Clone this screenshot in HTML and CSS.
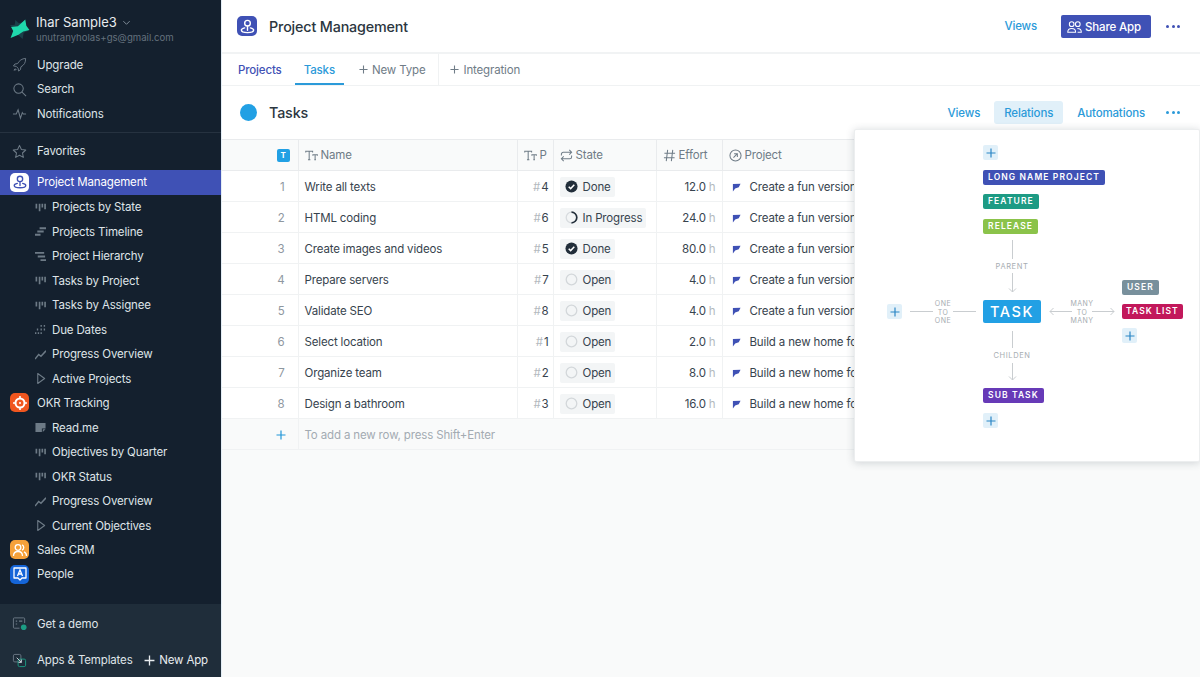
FILE: index.html
```html
<!DOCTYPE html>
<html lang="en">
<head>
    <meta charset="UTF-8">
    <title>Project Management - Tasks</title>
    <link rel="stylesheet" href="styles.css">
</head>
<body>
    <svg class="sprite" xmlns="http://www.w3.org/2000/svg">
        <symbol id="i-board" viewBox="0 0 12 12"><path d="M1.500 2v5M5 2v8M8 2v4M11 2v6" fill="none" stroke="currentColor" stroke-width="1.800"/></symbol>
        <symbol id="i-timeline" viewBox="0 0 12 12"><path d="M5 2.500h7M2.500 6h7M0 9.500h6" fill="none" stroke="currentColor" stroke-width="2.200"/></symbol>
        <symbol id="i-tree" viewBox="0 0 12 12"><path d="M0 2h10M3 6h8M6 10h6" fill="none" stroke="currentColor" stroke-width="2"/></symbol>
        <symbol id="i-dates" viewBox="0 0 12 12"><path d="M6 2h1.500M9.500 2H11M2 6h1.500M6 6h1.500M9.500 6H11M0 10h1.500M3 10h1.500M6 10h1.500" fill="none" stroke="currentColor" stroke-width="2"/></symbol>
        <symbol id="i-chart" viewBox="0 0 12 12"><path d="M0 11l4-5 2.500 2L12 2" fill="none" stroke="currentColor" stroke-width="1.600"/></symbol>
        <symbol id="i-play" viewBox="0 0 12 12"><path d="M3 .5L10.500 6 3 11.500z" fill="none" stroke="currentColor" stroke-width="1.200" stroke-linejoin="round"/></symbol>
        <symbol id="i-doc" viewBox="0 0 12 12"><path d="M.5 1h11v6H7.500v4h-7zM8.500 11l3-3h-3z" fill="currentColor"/></symbol>
        <symbol id="i-pin" viewBox="0 0 18 18"><circle cx="9" cy="5.500" r="3" fill="none" stroke="currentColor" stroke-width="1.500"/><path d="M9 8.500v4.500M6 10.500c-2.200.5-3.500 1.200-3.500 2.300C2.500 14.400 5.400 15.500 9 15.500s6.500-1.100 6.500-2.700c0-1.100-1.300-1.800-3.500-2.300" fill="none" stroke="currentColor" stroke-width="1.500" stroke-linecap="round"/></symbol>
        <symbol id="i-text" viewBox="0 0 14 14"><path d="M.8 3.800V2.300h7.400v1.500M4.500 2.300v9.200M3.200 11.500h2.600M8.500 7.200V6.200h4.800v1M10.900 6.200v5.300M10 11.500h1.800" fill="none" stroke="currentColor" stroke-width="1.100"/></symbol>
        <symbol id="i-done" viewBox="0 0 14 14"><circle cx="7" cy="7" r="6.500" fill="#222e3a"/><path d="M4 7.200l2.100 2.100L10 5.200" fill="none" stroke="#fff" stroke-width="1.600"/></symbol>
        <symbol id="i-progress" viewBox="0 0 14 14"><circle cx="7" cy="7" r="5.700" fill="none" stroke="#d8dcdf" stroke-width="1.400"/><path d="M7 1.300a5.700 5.700 0 0 1 0 11.400" fill="none" stroke="#222e3a" stroke-width="1.800"/></symbol>
        <symbol id="i-open" viewBox="0 0 14 14"><circle cx="7" cy="7" r="5.700" fill="none" stroke="#d3d7da" stroke-width="1.400"/></symbol>
        <symbol id="i-flag" viewBox="0 0 10 10"><path d="M1 1.200L9.500.8 7.500 4.600 3.500 6 1 9.500z" fill="#3f51b5"/></symbol>
        <symbol id="i-plus" viewBox="0 0 10 10"><path d="M5 .5v9M.5 5h9" fill="none" stroke="currentColor" stroke-width="1.200"/></symbol>
    </svg>

    <div class="app">
        <aside class="sidebar">
            <div class="account">
                <svg class="logo" width="21" height="21" viewBox="0 0 20 20"><path d="M6 1l3.500 3L13 3l1 5 5 3-5 2-1 6-4.500-4-6 1 2.500-5L1 6l4.500-.5z" fill="#1b4049"/><path d="M15.500 .5l1 6 3 4-6 1.500-4.500 3L1.500 18l2.500-6.500L2 7.500l6.500-.5z" fill="#1fd8ac"/></svg>
                <div class="account-text">
                    <div class="account-name">Ihar Sample3
                        <svg width="9" height="9" viewBox="0 0 10 10"><path d="M1.500 3.500L5 7l3.500-3.500" fill="none" stroke="#7f8c98" stroke-width="1.100"/></svg>
                    </div>
                    <div class="account-mail">unutranyholas+gs@gmail.com</div>
                </div>
            </div>

            <nav class="nav">
                <a class="nav-item">
                    <svg class="nav-icon" viewBox="0 0 16 16"><path d="M14.500 1.500c-4 .3-6.500 2-8.500 5.500L3 7.500 1.500 9.500l3 .5 2 2 .5 3 2-1.500.5-3c3.500-2 5.200-4.500 5-9zM2 14l2.500-.5-1-1z" fill="none" stroke="currentColor" stroke-width="1"/></svg>
                    Upgrade
                </a>
                <a class="nav-item">
                    <svg class="nav-icon" viewBox="0 0 16 16"><circle cx="7" cy="7" r="5" fill="none" stroke="currentColor" stroke-width="1.100"/><path d="M10.700 10.700L15 15" stroke="currentColor" stroke-width="1.100"/></svg>
                    Search
                </a>
                <a class="nav-item">
                    <svg class="nav-icon" viewBox="0 0 16 16"><path d="M1 8.500h3.500L6.500 4l2.500 9 2-6 1 1.500h3" fill="none" stroke="currentColor" stroke-width="1.100"/></svg>
                    Notifications
                </a>
            </nav>

            <div class="nav nav-divided">
                <a class="nav-item">
                    <svg class="nav-icon" viewBox="0 0 16 16"><path d="M8 1.500l2 4.300 4.700.6-3.500 3.200.9 4.700L8 12l-4.100 2.300.9-4.700L1.300 6.400 6 5.800z" fill="none" stroke="currentColor" stroke-width="1.100" stroke-linejoin="round"/></svg>
                    Favorites
                </a>
            </div>

            <div class="nav nav-apps">
                <a class="nav-app is-active">
                    <span class="app-icon app-icon-white"><svg width="16" height="16"><use href="#i-pin"/></svg></span>
                    Project Management
                </a>
                <a class="nav-sub"><svg><use href="#i-board"/></svg>Projects by State</a>
                <a class="nav-sub"><svg><use href="#i-timeline"/></svg>Projects Timeline</a>
                <a class="nav-sub"><svg><use href="#i-tree"/></svg>Project Hierarchy</a>
                <a class="nav-sub"><svg><use href="#i-board"/></svg>Tasks by Project</a>
                <a class="nav-sub"><svg><use href="#i-board"/></svg>Tasks by Assignee</a>
                <a class="nav-sub"><svg><use href="#i-dates"/></svg>Due Dates</a>
                <a class="nav-sub"><svg><use href="#i-chart"/></svg>Progress Overview</a>
                <a class="nav-sub"><svg><use href="#i-play"/></svg>Active Projects</a>

                <a class="nav-app">
                    <span class="app-icon app-icon-orange">
                        <svg width="16" height="16" viewBox="0 0 16 16"><circle cx="8" cy="8" r="4.500" fill="none" stroke="#fff" stroke-width="2"/><path d="M8 1v3M8 12v3M1 8h3M12 8h3" stroke="#fff" stroke-width="1.600"/><circle cx="8" cy="8" r="1" fill="#fff"/></svg>
                    </span>
                    OKR Tracking
                </a>
                <a class="nav-sub"><svg><use href="#i-doc"/></svg>Read.me</a>
                <a class="nav-sub"><svg><use href="#i-board"/></svg>Objectives by Quarter</a>
                <a class="nav-sub"><svg><use href="#i-board"/></svg>OKR Status</a>
                <a class="nav-sub"><svg><use href="#i-chart"/></svg>Progress Overview</a>
                <a class="nav-sub"><svg><use href="#i-play"/></svg>Current Objectives</a>

                <a class="nav-app">
                    <span class="app-icon app-icon-amber">
                        <svg width="16" height="16" viewBox="0 0 16 16"><circle cx="6" cy="5.500" r="2.800" fill="none" stroke="#fff" stroke-width="1.300"/><path d="M1.500 14c0-3 1.800-4.500 4.500-4.500s4.500 1.500 4.500 4.500M10 2.900a2.800 2.800 0 0 1 0 5.200M12 9.800c1.600.6 2.500 2 2.500 4.200" fill="none" stroke="#fff" stroke-width="1.300"/></svg>
                    </span>
                    Sales CRM
                </a>
                <a class="nav-app">
                    <span class="app-icon app-icon-blue">
                        <svg width="16" height="16" viewBox="0 0 16 16"><path d="M2 2h12v10H10l-2 2-2-2H2z" fill="none" stroke="#fff" stroke-width="1.300" stroke-linejoin="round"/><path d="M5.500 10L8 4l2.500 6M6.500 8h3" fill="none" stroke="#fff" stroke-width="1.300"/></svg>
                    </span>
                    People
                </a>
            </div>

            <div class="sidebar-footer">
                <a class="nav-item">
                    <svg class="nav-icon" viewBox="0 0 16 16"><path d="M8 13H2.500A1 1 0 0 1 1.500 12V3a1 1 0 0 1 1-1h10a1 1 0 0 1 1 1v4.500" fill="none" stroke="currentColor" stroke-width="1"/><path d="M4 5.500h1.500M7.500 5.500H11M4 8.500h1.500" stroke="currentColor" stroke-width="1.200"/><circle cx="12.500" cy="12" r="3" fill="#1c9c84"/></svg>
                    Get a demo
                </a>
                <div class="footer-row">
                    <a class="nav-item">
                        <svg class="nav-icon" viewBox="0 0 16 16"><rect x="1.500" y="1.500" width="8" height="8" rx="1.500" fill="none" stroke="currentColor" stroke-width="1"/><rect x="6.500" y="6.500" width="8" height="8" rx="1.500" fill="none" stroke="#1c9c84" stroke-width="1"/><path d="M5 5l5 5M10 7v3H7" fill="none" stroke="#cfd6dc" stroke-width="1"/></svg>
                        Apps &amp; Templates
                    </a>
                    <a class="new-app"><svg width="11" height="11"><use href="#i-plus"/></svg>New App</a>
                </div>
            </div>
        </aside>

        <main class="main">
            <header class="topbar">
                <span class="app-icon app-icon-indigo"><svg width="17" height="17"><use href="#i-pin"/></svg></span>
                <h1>Project Management</h1>
                <a class="link topbar-views">Views</a>
                <a class="share-btn">
                    <svg width="15" height="14" viewBox="0 0 16 14"><circle cx="5" cy="4" r="2.500" fill="none" stroke="#fff" stroke-width="1.100"/><circle cx="11.500" cy="4" r="2.500" fill="none" stroke="#fff" stroke-width="1.100"/><path d="M.8 12.500c0-2.500 1.500-4 4.200-4s4.200 1.500 4.200 4zM11 8.500c2.700 0 4.300 1.500 4.300 4h-4" fill="none" stroke="#fff" stroke-width="1.100"/></svg>
                    Share App
                </a>
                <span class="dots"><i></i><i></i><i></i></span>
            </header>

            <div class="tabs">
                <a class="tab tab-projects">Projects</a>
                <a class="tab is-active">Tasks</a>
                <a class="tab tab-add"><svg width="9" height="9"><use href="#i-plus"/></svg>New Type</a>
                <a class="tab tab-add tab-integration"><svg width="9" height="9"><use href="#i-plus"/></svg>Integration</a>
            </div>

            <div class="type-header">
                <span class="type-dot"></span>
                <h2>Tasks</h2>
                <a class="link">Views</a>
                <a class="link link-active">Relations</a>
                <a class="link">Automations</a>
                <span class="dots dots-blue"><i></i><i></i><i></i></span>
            </div>

            <div class="table-area">
                <table class="grid">
                    <colgroup>
                        <col class="col-index"><col class="col-name"><col class="col-p"><col class="col-state"><col class="col-effort"><col>
                    </colgroup>
                    <thead>
                        <tr>
                            <th class="cell-index"><span class="t-badge">T</span></th>
                            <th><svg class="th-icon"><use href="#i-text"/></svg>Name</th>
                            <th><svg class="th-icon"><use href="#i-text"/></svg>P</th>
                            <th>
                                <svg class="th-icon" viewBox="0 0 14 14"><path d="M1.500 7V5.500a2 2 0 0 1 2-2h9M10 1l2.500 2.500L10 6M12.500 7v1.500a2 2 0 0 1-2 2h-9M4 8l-2.500 2.500L4 13" fill="none" stroke="currentColor" stroke-width="1.100"/></svg>State
                            </th>
                            <th>
                                <svg class="th-icon" viewBox="0 0 14 14"><path d="M5 1L3.500 13M10.500 1L9 13M1.500 4.500h11.500M1 9.500h11.500" fill="none" stroke="currentColor" stroke-width="1.100"/></svg>Effort
                            </th>
                            <th>
                                <svg class="th-icon" viewBox="0 0 14 14"><circle cx="7" cy="7" r="6" fill="none" stroke="currentColor" stroke-width="1.100"/><path d="M4.800 9.200L9 5M5.500 5H9v3.500" fill="none" stroke="currentColor" stroke-width="1.100"/></svg>Project
                            </th>
                        </tr>
                    </thead>
                    <tbody>
                        <tr>
                            <td class="cell-index">1</td><td>Write all texts</td><td class="cell-id"><span>#</span>4</td>
                            <td><span class="state"><svg><use href="#i-done"/></svg>Done</span></td>
                            <td class="cell-num">12.0 <span>h</span></td>
                            <td class="cell-project"><svg><use href="#i-flag"/></svg>Create a fun version of the product</td>
                        </tr>
                        <tr>
                            <td class="cell-index">2</td><td>HTML coding</td><td class="cell-id"><span>#</span>6</td>
                            <td><span class="state"><svg><use href="#i-progress"/></svg>In Progress</span></td>
                            <td class="cell-num">24.0 <span>h</span></td>
                            <td class="cell-project"><svg><use href="#i-flag"/></svg>Create a fun version of the product</td>
                        </tr>
                        <tr>
                            <td class="cell-index">3</td><td>Create images and videos</td><td class="cell-id"><span>#</span>5</td>
                            <td><span class="state"><svg><use href="#i-done"/></svg>Done</span></td>
                            <td class="cell-num">80.0 <span>h</span></td>
                            <td class="cell-project"><svg><use href="#i-flag"/></svg>Create a fun version of the product</td>
                        </tr>
                        <tr>
                            <td class="cell-index">4</td><td>Prepare servers</td><td class="cell-id"><span>#</span>7</td>
                            <td><span class="state"><svg><use href="#i-open"/></svg>Open</span></td>
                            <td class="cell-num">4.0 <span>h</span></td>
                            <td class="cell-project"><svg><use href="#i-flag"/></svg>Create a fun version of the product</td>
                        </tr>
                        <tr>
                            <td class="cell-index">5</td><td>Validate SEO</td><td class="cell-id"><span>#</span>8</td>
                            <td><span class="state"><svg><use href="#i-open"/></svg>Open</span></td>
                            <td class="cell-num">4.0 <span>h</span></td>
                            <td class="cell-project"><svg><use href="#i-flag"/></svg>Create a fun version of the product</td>
                        </tr>
                        <tr>
                            <td class="cell-index">6</td><td>Select location</td><td class="cell-id"><span>#</span>1</td>
                            <td><span class="state"><svg><use href="#i-open"/></svg>Open</span></td>
                            <td class="cell-num">2.0 <span>h</span></td>
                            <td class="cell-project"><svg><use href="#i-flag"/></svg>Build a new home for the team</td>
                        </tr>
                        <tr>
                            <td class="cell-index">7</td><td>Organize team</td><td class="cell-id"><span>#</span>2</td>
                            <td><span class="state"><svg><use href="#i-open"/></svg>Open</span></td>
                            <td class="cell-num">8.0 <span>h</span></td>
                            <td class="cell-project"><svg><use href="#i-flag"/></svg>Build a new home for the team</td>
                        </tr>
                        <tr>
                            <td class="cell-index">8</td><td>Design a bathroom</td><td class="cell-id"><span>#</span>3</td>
                            <td><span class="state"><svg><use href="#i-open"/></svg>Open</span></td>
                            <td class="cell-num">16.0 <span>h</span></td>
                            <td class="cell-project"><svg><use href="#i-flag"/></svg>Build a new home for the team</td>
                        </tr>
                        <tr class="row-add">
                            <td class="cell-index"><svg><use href="#i-plus"/></svg></td>
                            <td colspan="5">To add a new row, press Shift+Enter</td>
                        </tr>
                    </tbody>
                </table>
            </div>

            <!-- relations diagram, places are in styles.css -->
            <div class="relations">
                <span class="rel-add add-top"><svg width="10" height="10"><use href="#i-plus"/></svg></span>
                <span class="rel-tag tag-indigo">LONG NAME PROJECT</span>
                <span class="rel-tag tag-green">FEATURE</span>
                <span class="rel-tag tag-lime">RELEASE</span>

                <span class="rel-line line-parent"></span>
                <span class="rel-label label-parent">PARENT</span>
                <svg class="rel-arrow arrow-parent" width="11" height="20" viewBox="0 0 11 20"><path d="M5.500 0v19M2 15.500l3.500 3.500L9 15.500" fill="none" stroke="#c9cdd0"/></svg>

                <span class="rel-add add-left"><svg width="10" height="10"><use href="#i-plus"/></svg></span>
                <span class="rel-line line-one-a"></span>
                <span class="rel-label rel-stack label-one">ONE<br>TO<br>ONE</span>
                <span class="rel-line line-one-b"></span>

                <span class="rel-task">TASK</span>

                <svg class="rel-arrow arrow-many-a" width="23" height="11" viewBox="0 0 23 11"><path d="M23 5.500H1M4.500 2L1 5.500 4.500 9" fill="none" stroke="#c9cdd0"/></svg>
                <span class="rel-label rel-stack label-many">MANY<br>TO<br>MANY</span>
                <svg class="rel-arrow arrow-many-b" width="23" height="11" viewBox="0 0 23 11"><path d="M0 5.500h22M18.500 2L22 5.500 18.500 9" fill="none" stroke="#c9cdd0"/></svg>

                <span class="rel-tag tag-grey">USER</span>
                <span class="rel-tag tag-pink">TASK LIST</span>
                <span class="rel-add add-right"><svg width="10" height="10"><use href="#i-plus"/></svg></span>

                <span class="rel-line line-child"></span>
                <span class="rel-label label-child">CHILDEN</span>
                <svg class="rel-arrow arrow-child" width="11" height="18" viewBox="0 0 11 18"><path d="M5.500 0v17M2 13.500l3.500 3.500L9 13.500" fill="none" stroke="#c9cdd0"/></svg>

                <span class="rel-tag tag-purple">SUB TASK</span>
                <span class="rel-add add-bottom"><svg width="10" height="10"><use href="#i-plus"/></svg></span>
            </div>
        </main>
    </div>
</body>
</html>
```

FILE: styles.css
```css
* {
    box-sizing: border-box;
}

html, body {
    margin: 0;
    padding: 0;
    height: 100%;
    overflow: hidden;
    font-family: Inter, "Liberation Sans", sans-serif;
    font-size: 11.5px;
    letter-spacing: -0.15px;
    color: #37434e;
    background-color: #fff;
}

.sprite {
    display: none;
}

.app {
    display: flex;
    height: 677px;
}

/* sidebar */
.sidebar {
    width: 221px;
    flex-shrink: 0;
    display: flex;
    flex-direction: column;
    background-color: #14202e;
    color: #dfe4e8;
}

.account {
    display: flex;
    gap: 6px;
    height: 52px;
    padding: 14px 0 0 9px;
}

.logo {
    margin-top: 5px;
    flex-shrink: 0;
}

.account-name {
    font-size: 13px;
    letter-spacing: 0;
    line-height: 16px;
    color: #e8ecef;
}

.account-name svg {
    margin-left: 2px;
}

.account-mail {
    font-size: 9.6px;
    letter-spacing: 0;
    line-height: 15px;
    color: #64717d;
}

.nav-item {
    display: flex;
    align-items: center;
    gap: 10px;
    height: 24.5px;
    padding: 1px 0 0 12px;
    color: #dfe4e8;
    white-space: nowrap;
}

.nav-icon {
    width: 15px;
    height: 15px;
    flex-shrink: 0;
    color: #6d7a86;
}

.nav-divided {
    margin-top: 6px;
    padding: 6px 0;
    border-top: 1px solid #263240;
}

.nav-apps {
    flex: 1;
    margin-top: 1px;
}

.nav-app {
    display: flex;
    align-items: center;
    gap: 8px;
    height: 24.5px;
    padding: 0 0 0 10px;
    white-space: nowrap;
}

.nav-app.is-active {
    background-color: #3f51b5;
    color: #fff;
}

.app-icon {
    width: 19px;
    height: 19px;
    border-radius: 5px;
    display: inline-flex;
    align-items: center;
    justify-content: center;
    flex-shrink: 0;
}

.app-icon-white {
    background-color: #fff;
    color: #3f51b5;
}

.app-icon-orange {
    background-color: #f0561f;
}

.app-icon-amber {
    background-color: #f5a13a;
}

.app-icon-blue {
    background-color: #1565d8;
}

.app-icon-indigo {
    width: 20px;
    height: 20px;
    background-color: #3f51b5;
    color: #fff;
}

.nav-sub {
    display: flex;
    align-items: center;
    gap: 6px;
    height: 24.5px;
    padding: 1px 0 0 35px;
    white-space: nowrap;
}

.nav-sub svg {
    width: 11px;
    height: 11px;
    flex-shrink: 0;
    color: #6d7a86;
}

.sidebar-footer {
    height: 73px;
    padding-top: 7px;
    background-color: #1f2d3a;
}

.footer-row {
    display: flex;
    justify-content: space-between;
    margin-top: 12px;
    padding-right: 13px;
}

.new-app {
    display: flex;
    align-items: center;
    gap: 4px;
    padding-top: 1px;
    color: #e8ecef;
}

/* main area */
.main {
    flex: 1;
    min-width: 0;
    position: relative;
    display: flex;
    flex-direction: column;
    border-left: 1px solid #e3edf5;
}

.topbar {
    display: flex;
    align-items: center;
    height: 54px;
    padding: 0 20px 0 15px;
    border-bottom: 2px solid #f1f3f4;
}

.topbar h1 {
    flex: 1;
    margin: 0 0 0 12px;
    font-size: 14.3px;
    font-weight: 500;
    color: #2b3640;
}

.link {
    display: flex;
    align-items: center;
    height: 23px;
    color: #2b9ad9;
    font-weight: 500;
    padding: 0 10px;
    border-radius: 3px;
}

.topbar-views {
    margin-right: 14px;
}

.link-active {
    background-color: #e1f0f9;
}

.share-btn {
    display: flex;
    align-items: center;
    gap: 3px;
    height: 23px;
    padding: 1px 10px 0 6px;
    border-radius: 2px;
    background-color: #3f51b5;
    color: #fff;
    font-weight: 500;
}

.dots {
    display: flex;
    gap: 2.5px;
    margin-left: 15px;
    color: #3f51b5;
}

.dots i {
    width: 3px;
    height: 3px;
    border-radius: 50%;
    background-color: currentColor;
}

.dots-blue {
    color: #2b9ad9;
    margin-left: 7px;
}

.tabs {
    display: flex;
    height: 32px;
    padding-left: 7px;
    border-bottom: 1px solid #f0f2f3;
}

.tab {
    display: flex;
    align-items: center;
    gap: 4px;
    padding: 0 9px;
    font-weight: 500;
    color: #6f7c87;
}

.tab-projects {
    color: #3f51b5;
    margin-right: 4px;
}

.tab.is-active {
    color: #2b9ad9;
    border-bottom: 2px solid #2b9ad9;
    padding-top: 2px;
}

.tab-add {
    margin-left: 6px;
    font-weight: 400;
}

.tab-integration {
    margin-left: 4px;
    padding-left: 11px;
    border-left: 1px solid #f0f2f3;
}

.type-header {
    display: flex;
    align-items: center;
    gap: 4px;
    height: 53px;
    padding: 0 20px 0 18px;
}

.type-dot {
    width: 17px;
    height: 17px;
    border-radius: 50%;
    background-color: #22a0e4;
}

.type-header h2 {
    flex: 1;
    margin: 0 0 0 8px;
    font-size: 14.3px;
    font-weight: 500;
    color: #2b3640;
}

/* table */
.table-area {
    flex: 1;
    background-color: #f9fafa;
}

.grid {
    width: 100%;
    table-layout: fixed;
    border-collapse: collapse;
    background-color: #fff;
}

.col-index {
    width: 76px;
}

.col-name {
    width: 219px;
}

.col-p {
    width: 36px;
}

.col-state {
    width: 103px;
}

.col-effort {
    width: 66px;
}

.grid th, .grid td {
    height: 31px;
    padding: 0 6px;
    border: 1px solid #f0f2f3;
    white-space: nowrap;
    overflow: hidden;
    text-align: left;
    color: #37434e;
    font-weight: 400;
}

.grid td {
    padding-top: 1px;
}

.grid th {
    background-color: #f9fafa;
    color: #6f7c87;
    border-color: #e9ebed;
}

.grid th:first-child, .grid td:first-child {
    border-left: none;
}

.grid th:last-child, .grid td:last-child {
    border-right: none;
}

.th-icon {
    width: 13px;
    height: 13px;
    margin-right: 3px;
    vertical-align: -3px;
    color: #6f7c87;
}

.grid .cell-index {
    text-align: right;
    padding-right: 13px;
    color: #8e979f;
}

.t-badge {
    display: inline-block;
    width: 13px;
    height: 13px;
    border-radius: 2px;
    background-color: #22a0e4;
    color: #fff;
    font-size: 8px;
    font-weight: 700;
    line-height: 13px;
    text-align: center;
    vertical-align: middle;
    margin-right: -5px;
}

.grid .cell-id {
    text-align: right;
    padding-right: 4px;
}

.grid .cell-num {
    text-align: right;
}

.cell-id span {
    margin-right: 1px;
    color: #b3b9be;
}

.cell-num span {
    color: #b3b9be;
}

.state {
    display: inline-flex;
    align-items: center;
    gap: 5px;
    height: 20px;
    padding: 0 4px 0 5px;
    border-radius: 2px;
    background-color: #f3f5f6;
}

.state svg {
    width: 13px;
    height: 13px;
}

.grid .cell-project {
    padding-left: 9px;
}

.cell-project svg {
    width: 9px;
    height: 9px;
    margin-right: 9px;
    vertical-align: -1px;
}

.row-add td {
    background-color: #f9fafa;
    color: #a3abb2;
    border-right: none;
}

.grid .row-add .cell-index {
    border-right: 1px solid #f0f2f3;
}

.row-add .cell-index svg {
    width: 10px;
    height: 10px;
    margin-right: -1px;
    vertical-align: -1px;
    color: #2196d8;
}

/* relations popover, a free canvas for the diagram */
.relations {
    position: absolute;
    top: 129px;
    right: 0;
    width: 346px;
    height: 333px;
    background-color: #fff;
    border: 1px solid #eceeef;
    border-radius: 2px;
    box-shadow: 0 1px 8px rgba(40, 55, 70, 0.2);
}

.rel-add, .rel-tag, .rel-task, .rel-label, .rel-line, .rel-arrow {
    position: absolute;
}

.rel-add {
    display: flex;
    align-items: center;
    justify-content: center;
    width: 15px;
    height: 15px;
    border-radius: 2px;
    background-color: #e1f0f9;
    color: #2b86c5;
}

.add-top {
    left: 128px;
    top: 15px;
}

.add-left {
    left: 32px;
    top: 174px;
}

.add-right {
    left: 267px;
    top: 198px;
}

.add-bottom {
    left: 128px;
    top: 283px;
}

.rel-tag {
    height: 15px;
    padding: 0 5px;
    border-radius: 2px;
    color: #fff;
    font-size: 8.5px;
    font-weight: 600;
    letter-spacing: 1.1px;
    line-height: 15px;
    white-space: nowrap;
}

.tag-indigo {
    left: 128px;
    top: 40px;
    background-color: #3f51b5;
}

.tag-green {
    left: 128px;
    top: 64px;
    background-color: #1d9b84;
}

.tag-lime {
    left: 128px;
    top: 89px;
    background-color: #8bc34a;
}

.tag-grey {
    left: 267px;
    top: 150px;
    background-color: #78909c;
}

.tag-pink {
    left: 267px;
    top: 174px;
    padding: 0 4px;
    background-color: #c2185b;
}

.tag-purple {
    left: 128px;
    top: 258px;
    background-color: #673ab7;
}

.rel-task {
    left: 128px;
    top: 170px;
    width: 58px;
    height: 23px;
    border-radius: 2px;
    background-color: #22a0e4;
    color: #fff;
    font-size: 14.5px;
    font-weight: 500;
    letter-spacing: 1.6px;
    line-height: 23px;
    text-align: center;
}

.rel-label {
    font-size: 7.5px;
    letter-spacing: 0.6px;
    line-height: 9px;
    text-align: center;
    color: #a7adb2;
}

.rel-stack {
    font-size: 7px;
    letter-spacing: 0.5px;
    line-height: 8.500px;
}

.label-parent {
    left: 128px;
    top: 132px;
    width: 58px;
}

.label-child {
    left: 123px;
    top: 221px;
    width: 68px;
}

.label-one {
    left: 73px;
    top: 170px;
    width: 30px;
}

.label-many {
    left: 207px;
    top: 170px;
    width: 40px;
}

.rel-line {
    background-color: #c9cdd0;
}

.line-parent {
    left: 157px;
    top: 110px;
    width: 1px;
    height: 19px;
}

.line-child {
    left: 157px;
    top: 201px;
    width: 1px;
    height: 17px;
}

.line-one-a {
    left: 55px;
    top: 181px;
    width: 23px;
    height: 1px;
}

.line-one-b {
    left: 98px;
    top: 181px;
    width: 23px;
    height: 1px;
}

.arrow-parent {
    left: 152px;
    top: 143px;
}

.arrow-child {
    left: 152px;
    top: 233px;
}

.arrow-many-a {
    left: 194px;
    top: 176px;
}

.arrow-many-b {
    left: 237px;
    top: 176px;
}
```
